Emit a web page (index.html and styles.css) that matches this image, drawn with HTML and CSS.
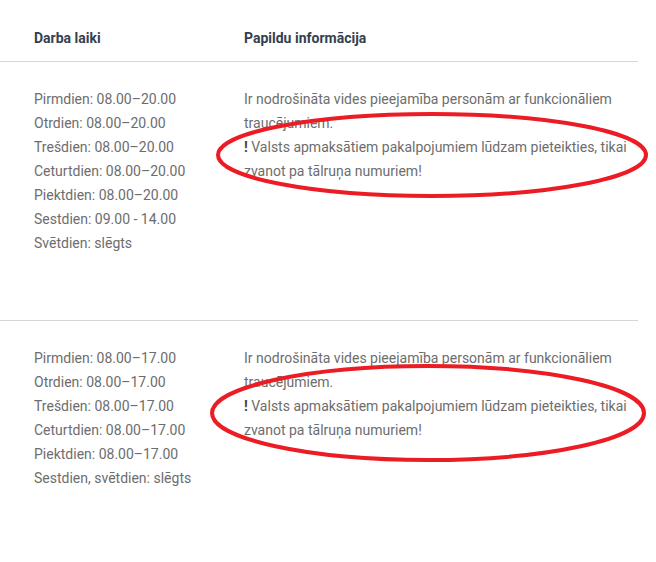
FILE: index.html
```html
<!DOCTYPE html>
<html lang="lv">
<head>
<meta charset="utf-8">
<link rel="stylesheet" href="styles.css">
</head>
<body>
<div class="table">
  <div class="row head">
    <div class="cell c1">Darba laiki</div>
    <div class="cell c2">Papildu informācija</div>
  </div>
  <div class="row body">
    <div class="cell c1">
      Pirmdien: 08.00–20.00<br>Otrdien: 08.00–20.00<br>Trešdien: 08.00–20.00<br>Ceturtdien: 08.00–20.00<br>Piektdien: 08.00–20.00<br>Sestdien: 09.00 - 14.00<br>Svētdien: slēgts
    </div>
    <div class="cell c2">
      Ir nodrošināta vides pieejamība personām ar funkcionāliem traucējumiem.<br><b>!</b> Valsts apmaksātiem pakalpojumiem lūdzam pieteikties, tikai zvanot pa tālruņa numuriem!
    </div>
  </div>
  <div class="row body">
    <div class="cell c1">
      Pirmdien: 08.00–17.00<br>Otrdien: 08.00–17.00<br>Trešdien: 08.00–17.00<br>Ceturtdien: 08.00–17.00<br>Piektdien: 08.00–17.00<br>Sestdien, svētdien: slēgts
    </div>
    <div class="cell c2">
      Ir nodrošināta vides pieejamība personām ar funkcionāliem traucējumiem.<br><b>!</b> Valsts apmaksātiem pakalpojumiem lūdzam pieteikties, tikai zvanot pa tālruņa numuriem!
    </div>
  </div>
</div>
<svg class="marks" width="656" height="562" viewBox="0 0 656 562">
  <ellipse cx="432" cy="155" rx="214" ry="41" fill="none" stroke="#ec1c24" stroke-width="4"/>
  <ellipse cx="428" cy="413" rx="216" ry="47" fill="none" stroke="#ec1c24" stroke-width="4"/>
</svg>
</body>
</html>
```

FILE: styles.css
```css
html, body {
  margin: 0;
  padding: 0;
  background: #fff;
}
body {
  font-family: Roboto, "Noto Sans", sans-serif;
  font-size: 14px;
  line-height: 24px;
  color: #6d6d6d;
  position: relative;
  width: 656px;
  height: 562px;
  overflow: hidden;
}
.table {
  width: 638px;
}
.row {
  display: grid;
  grid-template-columns: 244px 1fr;
}
.head {
  font-weight: 700;
  color: #34404f;
  padding: 26px 0 11px;
  border-bottom: 1px solid #d6d6d6;
}
.body {
  padding: 25px 0 65px;
  border-bottom: 1px solid #d6d6d6;
}
.body:last-child {
  border-bottom: none;
}
.c1 {
  padding-left: 34px;
}
.c2 b {
  color: #444;
}
.marks {
  position: absolute;
  left: 0;
  top: 0;
  pointer-events: none;
}
```
